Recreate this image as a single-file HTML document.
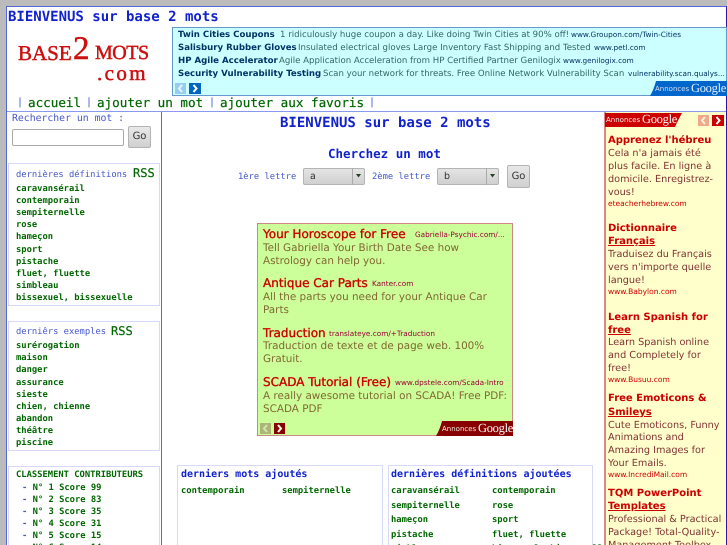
<!DOCTYPE html>
<html><head><meta charset="utf-8">
<style>
html,body{margin:0;padding:0;width:727px;height:545px;overflow:hidden;background:#bbb}
#p{position:absolute;left:0;top:0;width:727px;height:545px;overflow:hidden;font-family:"DejaVu Sans Mono",monospace;filter:blur(.35px);text-rendering:geometricPrecision}
.w{position:absolute;left:0;top:1px;width:727px;height:545px}
.b{position:absolute;box-sizing:border-box}
.t{position:absolute;white-space:nowrap;line-height:14px;height:14px}
.g{font-size:8.8px;font-weight:bold;color:#006600}
.s{font-size:8.8px;color:#4455cc}
.h{font-weight:bold;color:#1122cc}
.n{font-size:12.6px;color:#006600;-webkit-text-stroke:.2px #006600}
.pi{font-size:10px;color:#4455cc}
.r{font-size:12px;color:#006600;-webkit-text-stroke:.2px #006600}
.a{font-family:"DejaVu Sans",sans-serif}
.a1t{font-size:8.6px;font-weight:bold;color:#003366}
.a1d{font-size:8.6px;color:#336666}
.a1u{font-size:7.3px;color:#003366}
.a2t{font-size:12px;color:#cc0000;-webkit-text-stroke:.35px #cc0000}
.a2d{font-size:10.4px;color:#806633}
.a2u{font-size:7.3px;color:#990033}
.a3t{font-size:10px;font-weight:bold;color:#cc0000}
.a3d{font-size:9.7px;color:#803333}
.a3u{font-size:7.5px;color:#cc0000}
.lo{font-family:"Liberation Serif",serif;color:#cc1111;-webkit-text-stroke:.5px #cc1111}
.an{font-size:7px}
.go{font:12.5px/14px "Liberation Serif",serif;letter-spacing:-.3px}
.btn{position:absolute;box-sizing:border-box;background:linear-gradient(#e8e8e8,#d0d0d0);border:1px solid #b4b4b4;border-radius:2px;font:10px "DejaVu Sans",sans-serif;color:#333;text-align:center}
svg{position:absolute;overflow:visible}
</style></head><body><div id="p">
<div class="b" style="left:6px;top:6px;width:721px;height:545px;background:#fff;border:1px solid #5566dd;border-right-color:#3311aa"></div>
<div class="b" style="left:7px;top:111px;width:719px;height:1px;background:#8899ee"></div>
<div class="b" style="left:161px;top:112px;width:1px;height:433px;background:#5566dd"></div>

<div class="t h" style="left:8px;top:10px;font-size:14px">BIENVENUS sur base 2 mots</div>

<!-- logo -->
<div class="t lo" style="left:18px;top:42px;font-size:21px;line-height:22px;height:22px">BASE</div>
<div class="t lo" style="left:73px;top:30px;font-size:33px;line-height:38px;height:38px">2</div>
<div class="t lo" style="left:95px;top:42px;font-size:20px;line-height:22px;height:22px;letter-spacing:-.5px">MOTS</div>
<div class="t lo" style="left:97px;top:62px;font-size:21px;line-height:22px;height:22px;letter-spacing:2.4px">.com</div>

<!-- top ad -->
<div class="b" style="left:172px;top:27px;width:555px;height:69px;background:#ccffff;border:1px solid #6699cc"></div>
<div class="t a a1t" style="left:178px;top:28px">Twin Cities Coupons</div>
<div class="t a a1d" style="left:280px;top:28px">1 ridiculously huge coupon a day. Like doing Twin Cities at 90% off!</div>
<div class="t a a1u" style="left:571px;top:28px">www.Groupon.com/Twin-Cities</div>
<div class="t a a1t" style="left:178px;top:41px">Salisbury Rubber Gloves</div>
<div class="t a a1d" style="left:298px;top:41px">Insulated electrical gloves Large Inventory Fast Shipping and Tested</div>
<div class="t a a1u" style="left:594px;top:41px">www.petl.com</div>
<div class="t a a1t" style="left:178px;top:54px">HP Agile Accelerator</div>
<div class="t a a1d" style="left:279px;top:54px">Agile Application Acceleration from HP Certified Partner Genilogix</div>
<div class="t a a1u" style="left:563px;top:54px">www.genilogix.com</div>
<div class="t a a1t" style="left:178px;top:67px">Security Vulnerability Testing</div>
<div class="t a a1d" style="left:323px;top:67px">Scan your network for threats. Free Online Network Vulnerability Scan</div>
<div class="t a a1u" style="left:628px;top:67px">vulnerability.scan.qualys...</div>
<div class="b" style="left:175px;top:83px;width:11px;height:11px;background:#99ccee"></div>
<svg style="left:175px;top:83px" width="11" height="11"><path d="M7 2L4 5.500L7 9" fill="none" stroke="#e6f6ff" stroke-width="2"/></svg>
<div class="b" style="left:189px;top:83px;width:12px;height:11px;background:#0066bb"></div>
<svg style="left:189px;top:83px" width="12" height="11"><path d="M4.500 2L7.500 5.500L4.500 9" fill="none" stroke="#fff" stroke-width="2"/></svg>
<svg style="left:650px;top:81px" width="77" height="15"><path d="M6 0H77V15H0Q4 8 6 0Z" fill="#0066cc"/></svg>
<div class="t a an" style="left:655px;top:82px;color:#dde">Annonces</div>
<div class="t go" style="left:691px;top:81px;color:#e8f0ff">Google</div>

<!-- nav -->
<div class="t pi" style="left:17px;top:96px">|</div>
<div class="t n" style="left:28px;top:96px">accueil</div>
<div class="t pi" style="left:86px;top:96px">|</div>
<div class="t n" style="left:97px;top:96px">ajouter un mot</div>
<div class="t pi" style="left:209px;top:96px">|</div>
<div class="t n" style="left:220px;top:96px">ajouter aux favoris</div>
<div class="t pi" style="left:369px;top:96px">|</div>

<!-- search -->
<div class="t" style="left:12px;top:112px;font-size:9.8px;color:#4455cc">Rechercher un mot :</div>
<div class="b" style="left:12px;top:129px;width:112px;height:17px;background:#fff;border:1px solid #aaa;border-radius:2px"></div>
<div class="btn" style="left:128px;top:126px;width:23px;height:22px;line-height:20px">Go</div>

<!-- box borders -->
<div class="b" style="left:8px;top:163px;width:152px;height:143px;border:1px solid #d8d8f8"></div>
<div class="b" style="left:8px;top:321px;width:152px;height:130px;border:1px solid #d8d8f8"></div>
<div class="b" style="left:8px;top:466px;width:152px;height:100px;border:1px solid #d8d8f8"></div>
<div class="b" style="left:177px;top:465px;width:206px;height:100px;border:1px solid #d8d8f8"></div>
<div class="b" style="left:388px;top:465px;width:205px;height:100px;border:1px solid #d8d8f8"></div>

<div class="w">
<div class="t s" style="left:16px;top:167px">dernières définitions</div>
<div class="t r" style="left:133px;top:165px">RSS</div>
<div class="t g" style="left:16px;top:181px">caravansérail</div>
<div class="t g" style="left:16px;top:193px">contemporain</div>
<div class="t g" style="left:16px;top:205px">sempiternelle</div>
<div class="t g" style="left:16px;top:217px">rose</div>
<div class="t g" style="left:16px;top:229px">hameçon</div>
<div class="t g" style="left:16px;top:242px">sport</div>
<div class="t g" style="left:16px;top:254px">pistache</div>
<div class="t g" style="left:16px;top:266px">fluet, fluette</div>
<div class="t g" style="left:16px;top:278px">simbleau</div>
<div class="t g" style="left:16px;top:290px">bissexuel, bissexuelle</div>

<div class="t s" style="left:16px;top:324px">derniêrs exemples</div>
<div class="t r" style="left:111px;top:323px">RSS</div>
<div class="t g" style="left:16px;top:338px">surérogation</div>
<div class="t g" style="left:16px;top:350px">maison</div>
<div class="t g" style="left:16px;top:362px">danger</div>
<div class="t g" style="left:16px;top:375px">assurance</div>
<div class="t g" style="left:16px;top:387px">sieste</div>
<div class="t g" style="left:16px;top:399px">chien, chienne</div>
<div class="t g" style="left:16px;top:411px">abandon</div>
<div class="t g" style="left:16px;top:423px">théâtre</div>
<div class="t g" style="left:16px;top:435px">piscine</div>

<div class="t g" style="left:16px;top:467px">CLASSEMENT CONTRIBUTEURS</div>
<div class="t g" style="left:22px;top:480px"><span style="color:#4455cc">-</span> N° 1 Score 99</div>
<div class="t g" style="left:22px;top:492px"><span style="color:#4455cc">-</span> N° 2 Score 83</div>
<div class="t g" style="left:22px;top:504px"><span style="color:#4455cc">-</span> N° 3 Score 35</div>
<div class="t g" style="left:22px;top:516px"><span style="color:#4455cc">-</span> N° 4 Score 31</div>
<div class="t g" style="left:22px;top:528px"><span style="color:#4455cc">-</span> N° 5 Score 15</div>
<div class="t g" style="left:22px;top:540px"><span style="color:#4455cc">-</span> N° 6 Score 14</div>

<div class="t h" style="left:280px;top:115px;font-size:14px">BIENVENUS sur base 2 mots</div>

<div class="t h" style="left:181px;top:467px;font-size:10px">derniers mots ajoutés</div>
<div class="t g" style="left:181px;top:483px">contemporain</div>
<div class="t g" style="left:282px;top:483px">sempiternelle</div>
<div class="t h" style="left:391px;top:467px;font-size:10px">dernières définitions ajoutées</div>
<div class="t g" style="left:391px;top:483px">caravansérail</div>
<div class="t g" style="left:492px;top:483px">contemporain</div>
<div class="t g" style="left:391px;top:498px">sempiternelle</div>
<div class="t g" style="left:492px;top:498px">rose</div>
<div class="t g" style="left:391px;top:512px">hameçon</div>
<div class="t g" style="left:492px;top:512px">sport</div>
<div class="t g" style="left:391px;top:527px">pistache</div>
<div class="t g" style="left:492px;top:527px">fluet, fluette</div>
<div class="t g" style="left:391px;top:541px">simbleau</div>
<div class="t g" style="left:492px;top:541px">bissexuel, bissexuelle</div>
</div>

<!-- centre -->
<div class="t h" style="left:328px;top:147px;font-size:12.5px">Cherchez un mot</div>
<div class="t s" style="left:238px;top:170px">1ère lettre</div>
<div class="b" style="left:303px;top:168px;width:62px;height:17px;background:linear-gradient(#e4e4e4,#d0d0d0);border:1px solid #b4b4b4;border-radius:2px"></div>
<div class="b" style="left:352px;top:168px;width:1px;height:17px;background:#aaa"></div>
<svg style="left:355px;top:174px" width="7" height="5"><path d="M1 0H6L3.500 3.500Z" fill="#224422"/></svg>
<div class="t a" style="left:310px;top:170px;font-size:9.5px;color:#333">a</div>
<div class="t s" style="left:372px;top:170px">2ème lettre</div>
<div class="b" style="left:437px;top:168px;width:62px;height:17px;background:linear-gradient(#e4e4e4,#d0d0d0);border:1px solid #b4b4b4;border-radius:2px"></div>
<div class="b" style="left:486px;top:168px;width:1px;height:17px;background:#aaa"></div>
<svg style="left:489px;top:174px" width="7" height="5"><path d="M1 0H6L3.500 3.500Z" fill="#224422"/></svg>
<div class="t a" style="left:444px;top:170px;font-size:9.5px;color:#333">b</div>
<div class="btn" style="left:507px;top:165px;width:23px;height:23px;line-height:21px">Go</div>

<!-- centre ad -->
<div class="b" style="left:257px;top:223px;width:256px;height:213px;background:#ccff99;border:1px solid #cc8888"></div>
<div class="t a a2t" style="left:263px;top:227px">Your Horoscope for Free</div>
<div class="t a a2u" style="left:415px;top:228px">Gabriella-Psychic.com/...</div>
<div class="t a a2d" style="left:263px;top:241px">Tell Gabriella Your Birth Date See how</div>
<div class="t a a2d" style="left:263px;top:254px">Astrology can help you.</div>
<div class="t a a2t" style="left:263px;top:276px">Antique Car Parts</div>
<div class="t a a2u" style="left:372px;top:277px">Kanter.com</div>
<div class="t a a2d" style="left:263px;top:290px">All the parts you need for your Antique Car</div>
<div class="t a a2d" style="left:263px;top:303px">Parts</div>
<div class="t a a2t" style="left:263px;top:326px">Traduction</div>
<div class="t a a2u" style="left:329px;top:327px">translateye.com/+Traduction</div>
<div class="t a a2d" style="left:263px;top:339px">Traduction de texte et de page web. 100%</div>
<div class="t a a2d" style="left:263px;top:352px">Gratuit.</div>
<div class="t a a2t" style="left:263px;top:375px">SCADA Tutorial (Free)</div>
<div class="t a a2u" style="left:395px;top:376px">www.dpstele.com/Scada-Intro</div>
<div class="t a a2d" style="left:263px;top:389px">A really awesome tutorial on SCADA! Free PDF:</div>
<div class="t a a2d" style="left:263px;top:402px">SCADA PDF</div>
<div class="b" style="left:260px;top:423px;width:11px;height:11px;background:#aab577"></div>
<svg style="left:260px;top:423px" width="11" height="11"><path d="M7 2L4 5.500L7 9" fill="none" stroke="#d8e0b0" stroke-width="2"/></svg>
<div class="b" style="left:274px;top:423px;width:11px;height:11px;background:#880000"></div>
<svg style="left:274px;top:423px" width="11" height="11"><path d="M4 2L7 5.500L4 9" fill="none" stroke="#ffe" stroke-width="2"/></svg>
<svg style="left:436px;top:421px" width="77" height="15"><path d="M6 0H77V15H0Q4 8 6 0Z" fill="#880000"/></svg>
<div class="t a an" style="left:442px;top:422px;color:#eed">Annonces</div>
<div class="t go" style="left:478px;top:421px;color:#fff">Google</div>

<!-- right ad -->
<div class="b" style="left:604px;top:112px;width:122px;height:433px;background:#ffffcc;border-left:2px solid #dd8888"></div>
<svg style="left:605px;top:113px" width="77" height="14"><path d="M0 0H77Q73 7 70 14H0Z" fill="#cc0000"/></svg>
<div class="t a an" style="left:606px;top:113px;color:#fee">Annonces</div>
<div class="t go" style="left:642px;top:112px;color:#fff">Google</div>
<div class="b" style="left:698px;top:115px;width:11px;height:11px;background:#eeaa88"></div>
<svg style="left:698px;top:115px" width="11" height="11"><path d="M7 2L4 5.500L7 9" fill="none" stroke="#ffeedd" stroke-width="2"/></svg>
<div class="b" style="left:712px;top:115px;width:12px;height:11px;background:#cc0000"></div>
<svg style="left:712px;top:115px" width="12" height="11"><path d="M4.500 2L7.500 5.500L4.500 9" fill="none" stroke="#fff" stroke-width="2"/></svg>

<div class="w">
<div class="t a a3t" style="left:608px;top:133px">Apprenez l'hébreu</div>
<div class="t a a3d" style="left:608px;top:146px">Cela n'a jamais été</div>
<div class="t a a3d" style="left:608px;top:159px">plus facile. En ligne à</div>
<div class="t a a3d" style="left:608px;top:172px">domicile. Enregistrez-</div>
<div class="t a a3d" style="left:608px;top:185px">vous!</div>
<div class="t a a3u" style="left:608px;top:196px">eteacherhebrew.com</div>
<div class="t a a3t" style="left:608px;top:221px">Dictionnaire</div>
<div class="t a a3t" style="left:608px;top:234px;text-decoration:underline">Français</div>
<div class="t a a3d" style="left:608px;top:247px">Traduisez du Français</div>
<div class="t a a3d" style="left:608px;top:260px">vers n'importe quelle</div>
<div class="t a a3d" style="left:608px;top:273px">langue!</div>
<div class="t a a3u" style="left:608px;top:284px">www.Babylon.com</div>
<div class="t a a3t" style="left:608px;top:310px">Learn Spanish for</div>
<div class="t a a3t" style="left:608px;top:323px;text-decoration:underline">free</div>
<div class="t a a3d" style="left:608px;top:335px">Learn Spanish online</div>
<div class="t a a3d" style="left:608px;top:348px">and Completely for</div>
<div class="t a a3d" style="left:608px;top:361px">free!</div>
<div class="t a a3u" style="left:608px;top:372px">www.Busuu.com</div>
<div class="t a a3t" style="left:608px;top:391px">Free Emoticons &amp;</div>
<div class="t a a3t" style="left:608px;top:405px;text-decoration:underline">Smileys</div>
<div class="t a a3d" style="left:608px;top:418px">Cute Emoticons, Funny</div>
<div class="t a a3d" style="left:608px;top:430px">Animations and</div>
<div class="t a a3d" style="left:608px;top:443px">Amazing Images for</div>
<div class="t a a3d" style="left:608px;top:456px">Your Emails.</div>
<div class="t a a3u" style="left:608px;top:467px">www.IncrediMail.com</div>
<div class="t a a3t" style="left:608px;top:486px">TQM PowerPoint</div>
<div class="t a a3t" style="left:608px;top:499px;text-decoration:underline">Templates</div>
<div class="t a a3d" style="left:608px;top:512px">Professional &amp; Practical</div>
<div class="t a a3d" style="left:608px;top:525px">Package! Total-Quality-</div>
<div class="t a a3d" style="left:608px;top:538px">Management Toolbox</div>
</div>
</div></body></html>
